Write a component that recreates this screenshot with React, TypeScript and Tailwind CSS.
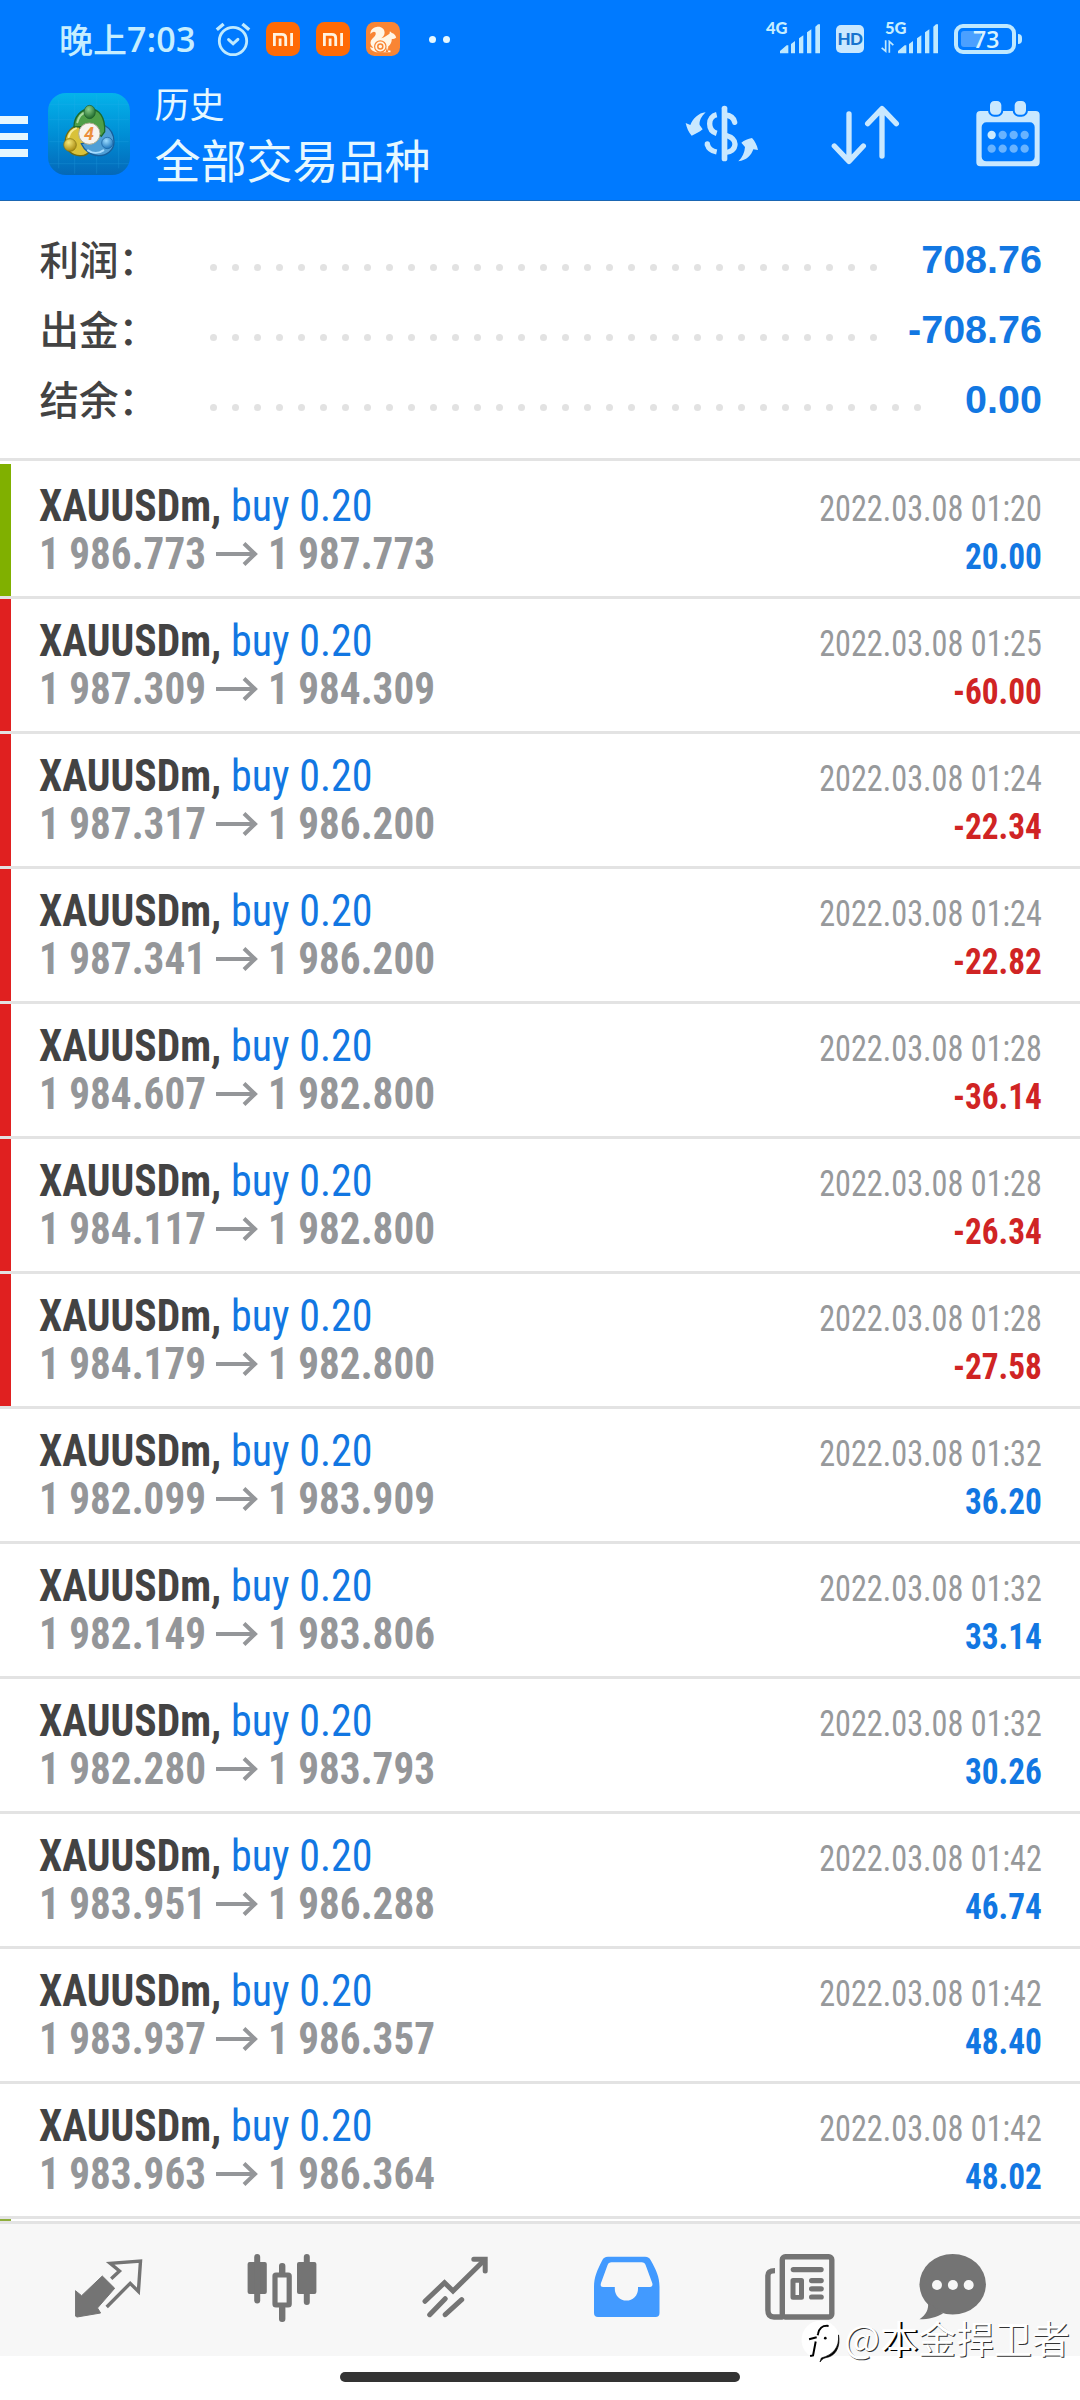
type Trade = {
  open: string;
  close: string;
  time: string;
  profit: string;
  mark?: "tp" | "sl";
};

const trades: Trade[] = [
  { open: "1 986.773", close: "1 987.773", time: "01:20", profit: "20.00", mark: "tp" },
  { open: "1 987.309", close: "1 984.309", time: "01:25", profit: "-60.00", mark: "sl" },
  { open: "1 987.317", close: "1 986.200", time: "01:24", profit: "-22.34", mark: "sl" },
  { open: "1 987.341", close: "1 986.200", time: "01:24", profit: "-22.82", mark: "sl" },
  { open: "1 984.607", close: "1 982.800", time: "01:28", profit: "-36.14", mark: "sl" },
  { open: "1 984.117", close: "1 982.800", time: "01:28", profit: "-26.34", mark: "sl" },
  { open: "1 984.179", close: "1 982.800", time: "01:28", profit: "-27.58", mark: "sl" },
  { open: "1 982.099", close: "1 983.909", time: "01:32", profit: "36.20" },
  { open: "1 982.149", close: "1 983.806", time: "01:32", profit: "33.14" },
  { open: "1 982.280", close: "1 983.793", time: "01:32", profit: "30.26" },
  { open: "1 983.951", close: "1 986.288", time: "01:42", profit: "46.74" },
  { open: "1 983.937", close: "1 986.357", time: "01:42", profit: "48.40" },
  { open: "1 983.963", close: "1 986.364", time: "01:42", profit: "48.02" },
];

const summary = [
  { label: "利润：", value: "708.76", dots: 31 },
  { label: "出金：", value: "-708.76", dots: 31 },
  { label: "结余：", value: "0.00", dots: 33 },
];

const AlarmIcon = () => (
  <svg viewBox="0 0 36 36" className="h-9 w-9" fill="none" stroke="#bfeaff" strokeWidth="3" strokeLinecap="round">
    <circle cx="18" cy="20" r="13.7" strokeWidth="2.8" />
    <path d="M1.8 8.8 8.6 3M27.4 3l6.8 5.8" strokeLinecap="butt" strokeWidth="3.4" />
    <path d="m13.6 18.6 4.5 4.2 4.8-4.5" />
  </svg>
);

const MiIcon = () => (
  <svg viewBox="0 0 34 34" className="h-[34px] w-[34px]">
    <rect width="34" height="34" rx="8.5" fill="#ff6a05" />
    <path
      d="M8.4 24V12.4h7.4c2.6 0 3.9 1.2 3.9 3.7V24M14.1 16.6V24M25.6 11v13"
      fill="none"
      stroke="#fff3df"
      strokeWidth="2.8"
    />
  </svg>
);

const SquirrelIcon = () => (
  <svg viewBox="0 0 34 34" className="h-[34px] w-[34px]">
    <rect width="34" height="34" rx="8.5" fill="#f98534" />
    <path
      d="M10.5 5c4.600-.8 8.200 1.900 8.100 5.700 0 2.700-1.700 4.100-3.300 5.500 3.300-.6 5.700-2.800 8.200-4.400l.4-2.600 2 1.900c2 .3 3.500 2 4.300 4.300-1.100 1.400-2.800 1.700-4.400 1.700 0 3-1.200 5.600-3.600 7.500l-.2 3.900h2.500v1.700H10.200C6.600 29.400 4 27.300 4.300 24.800c1 1 2 1.200 2.900.8C4.800 23.500 3.800 21 5 18.400c.9-2.200 4.300-3.900 4.700-6.200.3-1.700-.8-2.600-2.300-2.300C6.200 10.100 5 11 4.400 12 4.200 8.400 7 5.400 10.500 5Z"
      fill="#fff6e6"
    />
    <g fill="none" stroke="#f98534">
      <circle cx="14.300" cy="24.500" r="5.700" strokeWidth="1.200" />
      <circle cx="14.300" cy="24.500" r="2.500" strokeWidth="1.500" />
    </g>
    <path d="m19.500 30 1.500-4.500 1.200 4.500Z" fill="#f98534" />
  </svg>
);

const SignalIcon = () => (
  <svg viewBox="0 0 120 90" className="h-[30px] w-10" fill="#bfe9ff">
    <path d="M0 88v-7l20-17h5v24ZM33 88V60l12-9v37ZM57 88V43l13-9v54ZM81 88V25l13-9v72ZM106 88V8l8-7h6v87Z" />
  </svg>
);

const StatusBar = () => (
  <div className="flex h-[78px] items-center pr-[58px] pl-[59px] text-[#c6eeff]">
    <div className="flex w-[156px] items-center font-['Noto_Sans_CJK_SC',sans-serif] text-[34px] leading-none font-medium whitespace-nowrap">
      晚上
      <span className="font-['Open_Sans',sans-serif] text-[34px] font-semibold tracking-[0.3px]">7:03</span>
    </div>
    <AlarmIcon />
    <div className="ml-[15px] flex gap-4">
      <MiIcon />
      <MiIcon />
      <SquirrelIcon />
    </div>
    <div className="ml-[29px] flex gap-[7px]">
      <span className="h-[7px] w-[7px] rounded-full bg-[#e6f8ff]" />
      <span className="h-[7px] w-[7px] rounded-full bg-[#e6f8ff]" />
    </div>

    <div className="ml-auto flex items-center font-['Lato',sans-serif] font-bold">
      <div className="relative pl-[14px]">
        <span className="absolute -top-[6px] left-0 text-[16.500px] leading-[20px] font-black">4G</span>
        <SignalIcon />
      </div>
      <div className="ml-4 flex h-7 w-7 items-center justify-center rounded-[5px] bg-[#c9e8ff] text-[17px] font-black tracking-tight text-[#1673cf]">
        HD
      </div>
      <div className="relative ml-[17px] pl-[17px]">
        <span className="absolute -top-[6px] left-[4px] text-[16.500px] leading-[20px] font-black">5G</span>
        <svg viewBox="0 0 39 38" className="absolute bottom-px left-0 h-[13px] w-[13px]" fill="none" stroke="#bfe9ff" strokeWidth="5">
          <path d="M14 0v33L2 23M25 38V4l12 11" />
        </svg>
        <SignalIcon />
      </div>
      <div className="ml-4 flex h-[30px] w-[62px] items-center rounded-[9px] border-4 border-[#bfe9ff] px-[3px]">
        <div className="flex h-4 w-[20px] items-center rounded-[3px] bg-[#4ba0ff] pl-[12px] font-['Open_Sans',sans-serif] text-[23px] leading-none font-semibold text-[#d8f3ff]">
          73
        </div>
      </div>
      <span className="ml-[2px] h-[10px] w-1 rounded-r bg-[#bfe9ff]" />
    </div>
  </div>
);

const AppLogo = () => (
  <svg viewBox="0 0 246 246" className="ml-[20px] h-[82px] w-[82px]">
    <defs>
      <linearGradient id="sky" x1="0" y1="0" x2="0" y2="1">
        <stop offset="0" stopColor="#04b3ea" />
        <stop offset="0.5" stopColor="#008fd6" />
        <stop offset="1" stopColor="#0468b8" />
      </linearGradient>
      <radialGradient id="green" cx="0.4" cy="0.3" r="0.7">
        <stop offset="0" stopColor="#8ed08a" />
        <stop offset="1" stopColor="#1d6a2c" />
      </radialGradient>
      <radialGradient id="gold" cx="0.4" cy="0.3" r="0.7">
        <stop offset="0" stopColor="#f6e878" />
        <stop offset="1" stopColor="#a98a10" />
      </radialGradient>
      <radialGradient id="azure" cx="0.4" cy="0.3" r="0.7">
        <stop offset="0" stopColor="#9cdcff" />
        <stop offset="1" stopColor="#1f77bd" />
      </radialGradient>
    </defs>
    <rect width="246" height="246" rx="54" fill="url(#sky)" />
    <path
      d="M32 20v206M80 4v238M146 4v238M212 20v206M4 34h238M4 80h238M4 146h238M4 212h238"
      stroke="#35b5ee"
      strokeWidth="1.500"
      opacity="0.4"
    />
    <g strokeWidth="4">
      <path
        d="M92 96c-20 4-38 22-40 46-3 26 20 48 48 46 10 0 20-6 26-14l-18-26Z"
        fill="#d9c23a"
        stroke="#6d6a14"
      />
      <path
        d="M168 96c18 10 30 28 30 50 0 26-22 42-46 42-22 0-42-14-52-36l30-6Z"
        fill="#4f9fd6"
        stroke="#175f9c"
      />
      <path d="M78 102c0-30 20-54 48-54s46 24 44 68l-10 14-36-30Z" fill="#4f9f48" stroke="#1c6a2c" />
    </g>
    <g fill="none" strokeWidth="6" strokeLinecap="round">
      <path d="M88 88c4-16 14-27 26-30" stroke="#a9d9a0" />
      <path d="M62 132c3-12 11-22 22-26" stroke="#f7ec9a" />
      <path d="M120 172c14 10 32 10 46 0" stroke="#a6dcff" />
    </g>
    <ellipse cx="125" cy="57" rx="17" ry="20" fill="url(#green)" stroke="#1c5a2c" strokeWidth="2" />
    <circle cx="66" cy="156" r="19" fill="url(#gold)" stroke="#7d6f14" strokeWidth="2" />
    <circle cx="178" cy="150" r="17" fill="url(#azure)" stroke="#175f9c" strokeWidth="2" />
    <circle cx="124" cy="122" r="32" fill="#f7f3ee" stroke="#a9a98a" strokeWidth="3" />
    <text
      x="123"
      y="141"
      textAnchor="middle"
      fontSize="54"
      fill="#ec8f3c"
      className="font-['Roboto',sans-serif] font-bold italic"
    >
      4
    </text>
  </svg>
);

const SymbolIcon = () => (
  <svg viewBox="46 14 222 201" className="h-[67px] w-[74px]" fill="#c9e8ff">
    <rect x="156" y="31" width="17" height="167" rx="8" />
    <g fill="none" stroke="#c9e8ff" strokeWidth="16">
      <path d="M141 58c-13 3-21 14-21 27 0 14 8 25 21 29" />
      <path d="M113 147c3 12 13 20 28 23" />
      <path d="M113 147v-1" strokeLinecap="round" />
      <path d="M166 59c15 1 26 7 29 22" strokeLinecap="round" />
      <path d="M166 119c17 5 30 12 30 27s-13 25-31 26" />
    </g>
    <path d="M108 51C94 64 88 78 90 89l9 13c-10 8-21 14-33 19-9-10-15-23-18-38l14 6C70 70 86 53 108 51Z" />
    <path d="M206 198c12-12 19-27 20-43l-11-13c9-7 20-12 32-14 9 10 15 22 18 36l-14-2c-7 19-20 33-45 36Z" />
  </svg>
);

const SortIcon = () => (
  <svg
    viewBox="482 14 207 201"
    className="ml-[72px] h-[67px] w-[69px]"
    fill="none"
    stroke="#c9e8ff"
    strokeWidth="16"
    strokeLinecap="round"
    strokeLinejoin="round"
  >
    <path d="M536 56v142M492 152l44 46 43-46" />
    <path d="M635 182V40M592 85l43-45 43 45" />
  </svg>
);

const CalendarIcon = () => (
  <svg viewBox="919 14 192 201" className="ml-[76px] h-[67px] w-16">
    <path
      fillRule="evenodd"
      d="M932 47h166a12 12 0 0 1 12 12v142a12 12 0 0 1-12 12H932a12 12 0 0 1-12-12V59a12 12 0 0 1 12-12Zm18 34a14 14 0 0 0-14 14v89a14 14 0 0 0 14 14h131a14 14 0 0 0 14-14V95a14 14 0 0 0-14-14Z"
      fill="#c9e8ff"
    />
    <g fill="#c9e8ff" stroke="#007aff" strokeWidth="6">
      <rect x="958" y="14" width="40" height="47" rx="16" />
      <rect x="1032" y="14" width="40" height="47" rx="16" />
    </g>
    <g fill="#68b3ff">
      <circle cx="966" cy="119" r="12.500" fill="#cdebff" />
      <circle cx="999" cy="119" r="12.500" />
      <circle cx="1032" cy="119" r="12.500" />
      <circle cx="1065" cy="119" r="12.500" />
      <circle cx="966" cy="160" r="12.500" />
      <circle cx="999" cy="160" r="12.500" />
      <circle cx="1032" cy="160" r="12.500" />
      <circle cx="1065" cy="160" r="12.500" />
    </g>
  </svg>
);

const Header = () => (
  <header className="h-[201px] border-b border-[#1a66b3] bg-[#007aff]">
    <StatusBar />
    <div className="flex h-[111px] items-center pr-10">
      <div className="flex flex-col gap-[9px] pt-[6px]">
        <span className="h-[7.500px] w-[27.500px] bg-[#e6f7ff]" />
        <span className="h-[7.500px] w-[27.500px] bg-[#e6f7ff]" />
        <span className="h-[7.500px] w-[27.500px] bg-[#e6f7ff]" />
      </div>
      <AppLogo />
      <div className="ml-[25px] pb-[4px] font-['Noto_Sans_CJK_SC',sans-serif] text-[#e6f8ff]">
        <div className="text-[35px] leading-[52px]">历史</div>
        <div className="text-[46px] leading-[58px]">全部交易品种</div>
      </div>
      <div className="ml-auto flex items-center">
        <SymbolIcon />
        <SortIcon />
        <CalendarIcon />
      </div>
    </div>
  </header>
);

const Arrow = () => (
  <svg viewBox="0 0 42 24" className="mt-[12px] h-6 w-[42px]" fill="none" stroke="#949699" strokeWidth="4">
    <path d="M0 12h39M28 1.500 39 12 28 22.500" />
  </svg>
);

const markColors = {
  tp: "bg-[#80b000]",
  sl: "bg-[#e02020]",
};

const TradeRow = ({ trade }: { trade: Trade }) => (
  <li className="flex h-[135px] border-b-[3px] border-[#e3e3e3] font-['Roboto_Condensed','Roboto',sans-serif]">
    <div className={`w-[11px] ${trade.mark ? markColors[trade.mark] : ""}`} />
    <div className="flex-1 pt-[18px] pl-[28px] text-[44px] leading-[48px] whitespace-nowrap">
      <div className="flex">
        <span className="w-[192px] origin-left scale-x-[0.945] font-bold text-[#434343]">XAUUSDm,</span>
        <span className="origin-left scale-x-[0.955] text-[#1277e2]">buy 0.20</span>
      </div>
      <div className="flex font-bold text-[#949699]">
        <span className="w-[177px] origin-left scale-x-[0.935]">{trade.open}</span>
        <Arrow />
        <span className="ml-[10px] origin-left scale-x-[0.935]">{trade.close}</span>
      </div>
    </div>
    <div className="pt-[21px] pr-[38px] text-right text-[36px] leading-[48px] whitespace-nowrap">
      <div className="origin-right scale-x-[0.895] text-[#97999b]">2022.03.08 {trade.time}</div>
      <div
        className={`origin-right scale-x-[0.925] font-bold ${
          trade.profit.startsWith("-") ? "text-[#d02424]" : "text-[#1277e2]"
        }`}
      >
        {trade.profit}
      </div>
    </div>
  </li>
);

const QuotesIcon = () => (
  <svg viewBox="75 50 68 74" className="h-[74px] w-[68px]">
    <path d="M102.300 76 114.700 88.300 97.500 108l3.100 5L77 117l-1.600-1V90.700l6.200 5Z" fill="#747474" stroke="#747474" strokeLinejoin="round" />
    <path d="m111.200 78.700 8.300-7.700-9.300-7.700 30.300-2.300-2.100 30.500-8.200-8.200-23.500 23.700" fill="none" stroke="#747474" strokeWidth="3.400" />
  </svg>
);

const ChartsIcon = () => (
  <svg viewBox="246 50 70 74" className="h-[74px] w-[70px]" fill="#747474">
    <rect x="246.600" y="62" width="19.200" height="32" rx="2" />
    <rect x="253.200" y="54" width="6" height="49.500" rx="3" />
    <rect x="296" y="62" width="19.400" height="32" rx="2" />
    <rect x="302.800" y="54" width="6" height="51" rx="3" />
    <rect x="278" y="63" width="6.400" height="13" rx="3" />
    <rect x="278" y="105" width="6.400" height="17" rx="3" />
    <rect x="274" y="75" width="14.200" height="30" rx="1" fill="none" stroke="#747474" strokeWidth="5.200" />
  </svg>
);

const TrendIcon = () => (
  <svg viewBox="420 50 68 74" className="h-[74px] w-[68px]" fill="none" stroke="#747474" strokeWidth="5" strokeLinecap="round">
    <path d="m424 101.300 19.500-18.600 8.500 8.300 31.500-31" />
    <path d="M472.800 59.300h11.400V71M444.200 98.700l-15.500 16M460.700 99.700l-16.500 15" />
  </svg>
);

const HistoryIcon = () => (
  <svg viewBox="594 50 68 74" className="h-[74px] w-[68px]">
    <path
      fillRule="evenodd"
      d="M609 56.700h37c3 0 4.500 1 6 4 5 9 8.500 16 8.500 26V113a4 4 0 0 1-4 4H599a4 4 0 0 1-4-4V86.700c0-10 3.500-17 8-26 1.500-3 3-4 6-4Zm3.500 5.600c-2 0-3.200.8-4 3L602 83c-.8 2.500 0 4 2 4h11.800v2a11.600 11.600 0 0 0 23.200 0v-2h12c2 0 3-1.500 2.200-4l-6.500-17.700c-.8-2.200-2-3-4-3Z"
      fill="#429aff"
    />
  </svg>
);

const NewsIcon = () => (
  <svg viewBox="766 50 70 74" className="h-[74px] w-[70px]">
    <g fill="none" stroke="#747474" strokeWidth="5.400">
      <rect x="783.300" y="56.700" width="49.500" height="60.300" rx="3" />
      <path d="M776 70.600c-5 0-7.100 1.600-7.100 5V110c0 4.500 2 7 6 7h9" />
    </g>
    <g fill="#747474">
      <rect x="791.700" y="67" width="33" height="5.200" rx="2.600" />
      <rect x="810" y="78" width="14.800" height="5.200" rx="2.600" />
      <rect x="810" y="86.200" width="14.800" height="5.200" rx="2.600" />
      <rect x="810" y="94.400" width="14.800" height="5.200" rx="2.600" />
      <path fillRule="evenodd" d="M794 78h8.500a2.500 2.500 0 0 1 2.500 2.500v16.700a2.500 2.500 0 0 1-2.500 2.500H794a2.500 2.500 0 0 1-2.500-2.500V80.500A2.500 2.500 0 0 1 794 78Zm2.500 4.700V95h3.500V82.700Z" />
    </g>
  </svg>
);

const MessagesIcon = () => (
  <svg viewBox="918 50 70 74" className="h-[74px] w-[70px]">
    <ellipse cx="952.700" cy="84.300" rx="33.200" ry="30.300" fill="#747474" />
    <path d="M928 102c1 7-2 13-8.500 17.300 9.500 0 17-2 23.500-5.800Z" fill="#747474" />
    <g fill="#f7f7f7">
      <circle cx="937" cy="85" r="5" />
      <circle cx="952.900" cy="85" r="5" />
      <circle cx="968.700" cy="85" r="5" />
    </g>
  </svg>
);

const TabBar = () => (
  <nav className="flex h-[135px] items-center justify-between border-t-[3px] border-[#e3e3e3] bg-[#f7f7f7] pr-[92px] pb-[6px] pl-[75px]">
    <div className="flex gap-[104px]">
      <QuotesIcon />
      <ChartsIcon />
      <TrendIcon />
      <HistoryIcon />
      <NewsIcon />
    </div>
    <MessagesIcon />
  </nav>
);

const Watermark = () => (
  <div className="absolute top-[2311px] left-[800px] flex items-center">
    <svg viewBox="30 30 120 130" className="mt-[8px] h-[43px] w-10">
      <circle cx="92" cy="93" r="58" fill="#fff" />
      <path d="M146 78c3 38-16 60-52 70l-4 12c8-11 12-12 26-15 24-8 36-34 30-67Z" fill="#000" stroke="#000" strokeWidth="2" />
      <path d="M116 51c-20-2-28 6-32 24l-1 4M57 91l23-6M77 98l-8 42-9 2" fill="none" stroke="#000" strokeWidth="6" />
      <circle cx="106" cy="88" r="4" fill="#000" />
    </svg>
    <span className="ml-[4px] font-['Noto_Sans_CJK_SC',sans-serif] text-[38px] leading-[48px] text-white [text-shadow:1px_1px_0_#333]">
      @<span className="[text-shadow:2px_1px_0_#000]">本</span>金捍卫者
    </span>
  </div>
);

const App = () => (
  <div className="relative flex h-[2400px] w-[1080px] flex-col overflow-hidden bg-white">
    <Header />

    <section className="h-[260px] border-b-[3px] border-[#e3e3e3] pt-[22px] pr-[38px] pl-[39.500px]">
      {summary.map((item) => (
        <div key={item.label} className="flex h-[70px] items-center">
          <span className="w-[170px] font-['Noto_Sans_CJK_SC',sans-serif] text-[39.500px] font-medium text-[#434343]">
            {item.label}
          </span>
          <div className="flex gap-[15px] pt-[19px]">
            {Array.from({ length: item.dots }, (_, i) => (
              <span key={i} className="h-[7px] w-[7px] rounded-full bg-[#e2e2e2]" />
            ))}
          </div>
          <span className="ml-auto pt-[3px] font-['Liberation_Sans',sans-serif] text-[39.500px] font-bold text-[#1277e2]">
            {item.value}
          </span>
        </div>
      ))}
    </section>

    <ul className="mt-[3px]">
      {trades.map((trade) => (
        <TradeRow key={trade.open} trade={trade} />
      ))}
    </ul>
    <div className="h-[2px] w-[11px] bg-[#8fae3c]" />

    <TabBar />
    <div className="mx-auto mt-4 h-[10px] w-[400px] rounded-full bg-[#333333]" />

    <Watermark />
  </div>
);

export default App;
